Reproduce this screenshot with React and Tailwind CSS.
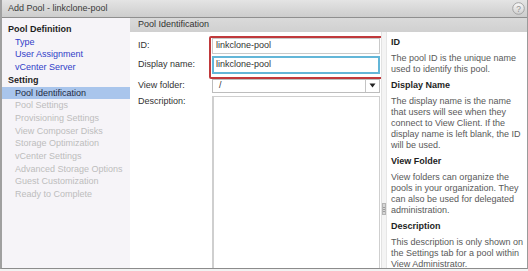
import React from 'react';

const navSetting = [
  'Pool Settings',
  'Provisioning Settings',
  'View Composer Disks',
  'Storage Optimization',
  'vCenter Settings',
  'Advanced Storage Options',
  'Guest Customization',
  'Ready to Complete',
];

const help = [
  { title: 'ID', lines: ['The pool ID is the unique name', 'used to identify this pool.'] },
  {
    title: 'Display Name',
    lines: [
      'The display name is the name',
      'that users will see when they',
      'connect to View Client. If the',
      'display name is left blank, the ID',
      'will be used.',
    ],
  },
  {
    title: 'View Folder',
    lines: [
      'View folders can organize the',
      'pools in your organization. They',
      'can also be used for delegated',
      'administration.',
    ],
  },
  {
    title: 'Description',
    lines: ['This description is only shown on', 'the Settings tab for a pool within', 'View Administrator.'],
  },
];

const HelpIcon = () => (
  <svg width="13" height="13" viewBox="0 0 13 13">
    <defs>
      <linearGradient id="hg" x1="0" y1="0" x2="0" y2="1">
        <stop offset="0" stopColor="#fafafa" />
        <stop offset="1" stopColor="#cfcfcf" />
      </linearGradient>
    </defs>
    <circle cx="6.5" cy="6.5" r="5.8" fill="url(#hg)" stroke="#a3a3a3" strokeWidth="1" />
    <text x="6.5" y="9.6" textAnchor="middle" fontSize="8.5" fontFamily="Liberation Sans, Arial, sans-serif" fill="#8f8f8f">
      ?
    </text>
  </svg>
);

const App = () => {
  return (
    <div className="w-[528px] h-[271px] bg-[#f2f2f2] overflow-hidden font-['Liberation_Sans',Arial,sans-serif] text-[9px] text-[#333]">
      <div className="h-[269px] flex flex-col border-l-2 border-r border-b border-l-[#a0a0a0] border-r-[#9a9a9a] border-b-[#8c8c8c] bg-white">
        {/* title bar */}
        <div className="h-[18px] flex items-center justify-between pl-[6px] pr-[2px] bg-gradient-to-b from-[#e4e4e4] to-[#cdcdcd] border-b border-[#8f8f8f]">
          <span className="text-[#3a3a3a]">Add Pool - linkclone-pool</span>
          <HelpIcon />
        </div>

        <div className="flex flex-1 min-h-0">
          {/* left nav */}
          <div className="w-[128px] bg-[#f6f4f8] pt-[5px] leading-[12.7px]">
            <div className="pl-[6px] font-bold text-[#1e1e1e]">Pool Definition</div>
            <div className="pl-[13px] text-[#3140c8]">Type</div>
            <div className="pl-[13px] text-[#3140c8]">User Assignment</div>
            <div className="pl-[13px] text-[#3140c8]">vCenter Server</div>
            <div className="pl-[6px] font-bold text-[#1e1e1e]">Setting</div>
            <div className="pl-[13px] bg-[#a9c5ec] text-[#1e2a44]">Pool Identification</div>
            {navSetting.map((n) => (
              <div key={n} className="pl-[13px] text-[#bdbdbd]">
                {n}
              </div>
            ))}
          </div>

          {/* main */}
          <div className="flex-1 flex flex-col min-w-0">
            <div className="h-[14px] flex items-center pl-[8px] bg-gradient-to-b from-[#dadada] to-[#d0d0d0] text-[#333]">
              Pool Identification
            </div>
            <div className="flex flex-1 min-h-0">
              {/* form */}
              <div className="relative w-[251px] pl-[8px] pt-[6px] flex flex-col">
                <div className="flex items-center h-[16px]">
                  <span className="w-[74px]">ID:</span>
                  <div className="w-[168px] h-[16px] border border-[#c9c9c9] flex items-center pl-[3px] text-[#333]">
                    linkclone-pool
                  </div>
                </div>
                <div className="flex items-center h-[18px] mt-[2px]">
                  <span className="w-[74px]">Display name:</span>
                  <div className="w-[168px] h-[18px] border-2 border-[#63b6d8] flex items-center pl-[2px] text-[#333]">
                    linkclone-pool
                  </div>
                </div>
                <div className="flex items-center h-[13px] mt-[5px]">
                  <span className="w-[74px]">View folder:</span>
                  <div className="w-[168px] h-[14px] border border-[#bdbdbd] flex items-center">
                    <span className="flex-1 pl-[6px]">/</span>
                    <div className="w-[14px] h-full border-l border-[#c4c4c4] flex items-center justify-center">
                      <svg width="7" height="5" viewBox="0 0 7 5">
                        <path d="M0.5 0.5 L6.5 0.5 L3.5 4.5 Z" fill="#222" />
                      </svg>
                    </div>
                  </div>
                </div>
                <div className="flex mt-[4px] flex-1">
                  <span className="w-[74px] leading-[11px]">Description:</span>
                  <div className="w-[168px] h-full border-l-2 border-r border-t border-[#cfcfcf] bg-white" />
                </div>
                <div className="absolute left-[79px] top-[4px] w-[176px] h-[43px] border-2 border-[#c0393b] rounded-[2px] pointer-events-none" />
              </div>

              {/* splitter / scrollbar */}
              <div className="w-[6px] relative border-l border-[#e2e2e2] bg-[#f4f4f4] border-r border-r-[#e6e6e6]">
                <div className="absolute left-[0px] top-[171px] w-[4px] h-[12px] bg-[#d6d6d6] border border-[#b4b4b4] flex flex-col justify-center gap-[1px]">
                  <div className="h-px bg-[#9d9d9d]" />
                  <div className="h-px bg-[#9d9d9d]" />
                  <div className="h-px bg-[#9d9d9d]" />
                </div>
              </div>

              {/* help */}
              <div className="flex-1 pl-[4px] pt-[5px] leading-[11px] whitespace-nowrap">
                {help.map((h) => (
                  <div key={h.title} className="mb-[5px]">
                    <div className="font-bold text-[#1e1e1e] mb-[5px]">{h.title}</div>
                    <div className="text-[#595959]">
                      {h.lines.map((l) => (
                        <div key={l}>{l}</div>
                      ))}
                    </div>
                  </div>
                ))}
              </div>
            </div>
          </div>
        </div>
      </div>
    </div>
  );
};

export default App;
